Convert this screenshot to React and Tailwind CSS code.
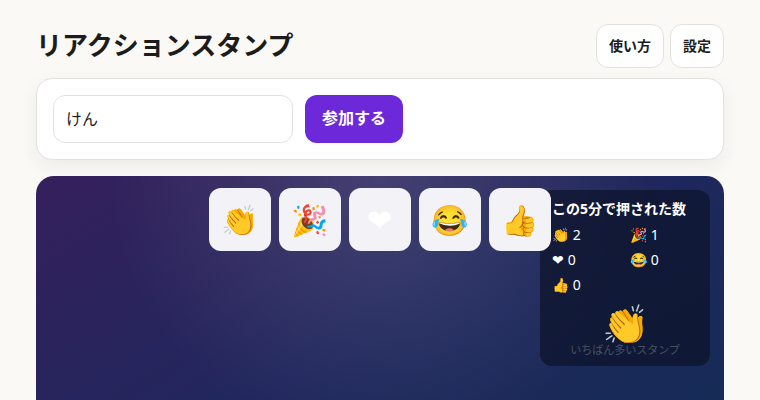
const reactions = [
  { emoji: '👏', label: '拍手', count: 2 },
  { emoji: '🎉', label: 'お祝い', count: 1 },
  { emoji: '❤', label: 'ハート', count: 0 },
  { emoji: '😂', label: '笑い', count: 0 },
  { emoji: '👍', label: 'いいね', count: 0 },
];

function HeaderButton({ children }) {
  return (
    <button
      type="button"
      className="h-11 rounded-xl border border-[#e2e2e0] bg-white px-3 text-sm font-bold"
    >
      {children}
    </button>
  );
}

function Stats() {
  return (
    <aside className="absolute top-3.5 right-3.5 w-[170px] rounded-xl bg-[#0b1228]/70 px-3 py-2 text-sm text-white">
      <h2 className="whitespace-nowrap leading-[22px] font-bold">この5分で押された数</h2>
      <ul className="mt-1 grid grid-cols-2 gap-x-2.5 gap-y-1">
        {reactions.map((r) => (
          <li key={r.label} className="h-[21px] leading-[21px]">
            {r.emoji} {r.count}
          </li>
        ))}
      </ul>
      <div className="mt-2 text-center">
        <div className="h-10 text-[38px] leading-10">👏</div>
        <div className="h-[15px] text-[11px] leading-[14px] text-[#4b5160]">いちばん多いスタンプ</div>
      </div>
    </aside>
  );
}

export default function App() {
  return (
    <div className="h-screen overflow-hidden bg-[#faf9f5] px-9 pt-6 font-['Noto_Sans','Noto_Sans_CJK_JP',sans-serif] text-[#1c1c1c]">
      <header className="flex items-start justify-between">
        <h1 className="text-[26px] leading-[42px] font-bold">リアクションスタンプ</h1>
        <nav className="flex gap-1.5">
          <HeaderButton>使い方</HeaderButton>
          <HeaderButton>設定</HeaderButton>
        </nav>
      </header>

      <form
        className="mt-2.5 flex gap-3 rounded-2xl border border-[#e2e2e0] bg-white p-4 shadow-[0_6px_18px_rgba(0,0,0,0.06)]"
        onSubmit={(e) => e.preventDefault()}
      >
        <input
          type="text"
          aria-label="名前"
          defaultValue="けん"
          className="h-12 w-60 rounded-xl border border-[#e2e2e0] bg-white px-3 pb-0.5 text-base"
        />
        <button
          type="submit"
          className="h-12 rounded-xl bg-[#6d28d9] px-[17px] pb-0.5 text-base font-bold text-white"
        >
          参加する
        </button>
      </form>

      <main className="relative mt-4 min-h-[420px] rounded-[18px] bg-[radial-gradient(circle_at_50%_0%,rgba(255,255,255,0.13),transparent_50%),linear-gradient(150deg,#35205c,#1f275c_45%,#0f2f52)] pt-3">
        <Stats />
        <div className="relative flex justify-center gap-2">
          {reactions.map((r) => (
            <button
              key={r.label}
              type="button"
              aria-label={r.label}
              className="h-[63px] w-[62px] rounded-xl bg-[#f3f3f7] pr-0.5 text-[30px] leading-none text-white"
            >
              {r.emoji}
            </button>
          ))}
        </div>
      </main>
    </div>
  );
}
